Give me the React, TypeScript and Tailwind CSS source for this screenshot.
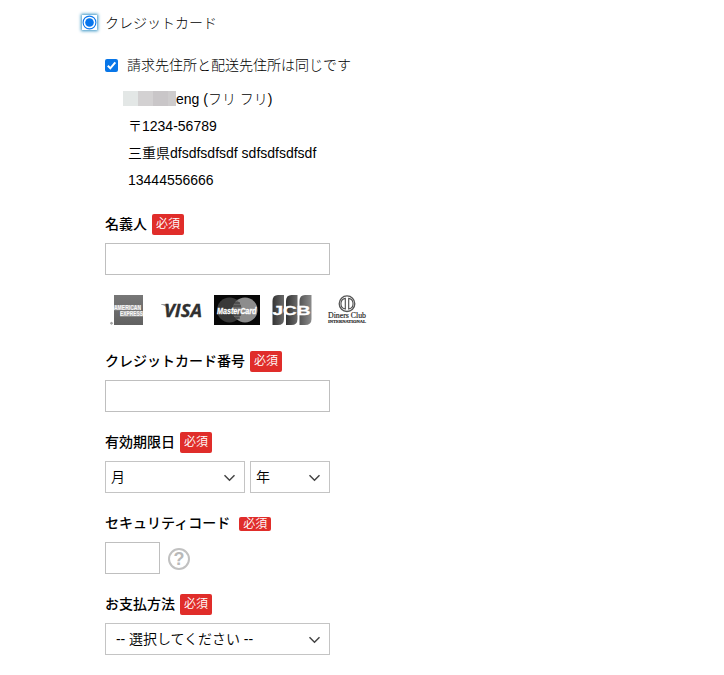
import type { ReactNode } from "react";

function Badge({ compact = false }: { compact?: boolean }) {
  return (
    <span
      className={`flex w-8 shrink-0 items-center justify-center rounded-[2px] bg-[#e02d2a] text-xs font-[350] text-white ${
        compact ? "ml-[9px] mt-px h-3.5" : "ml-[5px] h-[21px] pb-0.5"
      }`}
    >
      <span className={compact ? "leading-[14px]" : "leading-5"}>必須</span>
    </span>
  );
}

function Field({ label, compact, children }: { label: string; compact?: boolean; children: ReactNode }) {
  return (
    <div className="mb-5">
      <div className="mb-2 flex h-[21px] items-center">
        <span className="-mt-0.5 text-sm leading-5 font-medium">{label}</span>
        <Badge compact={compact} />
      </div>
      {children}
    </div>
  );
}

function TextBox({ narrow = false }: { narrow?: boolean }) {
  return (
    <input
      type="text"
      className={`block h-8 border border-[#bfbfbf] bg-white px-2 outline-none ${narrow ? "w-[55px]" : "w-[225px]"}`}
    />
  );
}

function Select({ text, className }: { text: string; className: string }) {
  return (
    <div
      className={`flex h-8 items-center justify-between border border-[#c4c4c4] bg-white pr-2 text-sm ${className}`}
    >
      <span className="leading-5 font-[350] tracking-[-0.04px] whitespace-pre">{text}</span>
      <svg width="13" height="8" viewBox="0 0 13 8" className="mt-0.5" fill="none" stroke="#444" strokeWidth="1.5">
        <path d="M1.5 1.2 6.5 6.2 11.5 1.2" />
      </svg>
    </div>
  );
}

function Cards() {
  return (
    <div className="mb-[26px] flex h-[30px] items-start">
      <svg width="34" height="30" viewBox="0 0 34 30" className="ml-[5px] overflow-visible">
        <defs>
          <linearGradient id="amex" x2="0" y2="1">
            <stop stopColor="#777" />
            <stop offset="1" stopColor="#616161" />
          </linearGradient>
        </defs>
        <path d="M4 0h29v30H4z" fill="url(#amex)" />
        <path d="M4 10h27v5.3H4zM10 16.2h23v5.3H10z" fill="#a5a5a5" />
        <g fontFamily="Liberation Sans" fontWeight="bold" fontSize="6.5" fill="#f7f7f7">
          <text x="4" y="15" textLength="27" lengthAdjust="spacingAndGlyphs">AMERICAN</text>
          <text x="10" y="21.2" textLength="23" lengthAdjust="spacingAndGlyphs">EXPRESS</text>
        </g>
        <circle cx="1.5" cy="28.3" r="1" fill="#aaa" stroke="#777" strokeWidth=".5" />
      </svg>
      <svg width="42" height="30" viewBox="0 0 42 30" className="ml-[17px] overflow-visible">
        <path d="M0 9h7l2 7Q6 11 0 9.5Z" fill="#999" />
        <text x="3" y="21.8" fontFamily="Open Sans" fontSize="17.5" fontWeight="700" fontStyle="italic" textLength="38" lengthAdjust="spacingAndGlyphs" fill="#303030" stroke="#303030" strokeWidth=".3">
          VISA
        </text>
      </svg>
      <svg width="46" height="30" viewBox="0 0 46 30" className="ml-[11px] overflow-visible">
        <path d="M0 0h46v30H0z" fill="#080808" />
        <circle cx="15.5" cy="15" r="12.5" fill="#393939" />
        <circle cx="31" cy="15" r="12.5" fill="#8d8d8d" />
        <path d="M23.2 5.3a12.5 12.5 0 0 1 0 19.4a12.5 12.5 0 0 1 0-19.4Z" fill="#686868" />
        <path d="M20 8h6M19 11h8M19 20h8M20 23h6" stroke="#393939" />
        <text x="3" y="19" fontFamily="Liberation Sans" fontSize="9.8" fontWeight="bold" fontStyle="italic" textLength="39.5" lengthAdjust="spacingAndGlyphs" fill="white" stroke="white" strokeWidth=".3">
          MasterCard
        </text>
      </svg>
      <svg width="40" height="30" viewBox="0 0 40 30" className="ml-3 overflow-visible">
        <defs>
          <linearGradient id="jcb">
            <stop stopColor="#343434" />
            <stop offset="1" stopColor="#696969" />
          </linearGradient>
          <linearGradient id="jcbRight">
            <stop stopColor="#555" />
            <stop offset="1" stopColor="#8b8b8b" />
          </linearGradient>
        </defs>
        <path d="M6 0h6v24q0 6-6 6H.5V6Q.5 0 6 0Z" fill="url(#jcb)" />
        <path d="M19.5 0h6v24q0 6-6 6H14V6q0-6 5.5-6Z" fill="url(#jcb)" />
        <path d="M33 0h6.5v24q0 6-6.5 6h-5.5V6q0-6 5.5-6Z" fill="url(#jcbRight)" />
        <text x="0.5" y="19.7" fontFamily="Liberation Sans" fontSize="13" fontWeight="bold" textLength="38" lengthAdjust="spacingAndGlyphs" fill="white" stroke="white" strokeWidth=".3">
          JCB
        </text>
      </svg>
      <svg width="40" height="30" viewBox="0 0 40 30" className="ml-[15px] overflow-visible">
        <circle cx="20" cy="8.7" r="7.8" fill="white" stroke="#555" strokeWidth="1.3" />
        <path d="M18.3 3.4v10.6a5.4 5.4 0 0 1 0-10.6ZM21.7 3.4a5.4 5.4 0 0 1 0 10.6Z" fill="white" stroke="#4c4c4c" strokeWidth="1.1" />
        <g fontFamily="Liberation Serif" fill="#292929" stroke="#292929" strokeWidth=".2">
          <text x="1" y="23" fontSize="8.5" textLength="38" lengthAdjust="spacingAndGlyphs">Diners Club</text>
          <text x="1" y="28" fontSize="5" fontWeight="bold" textLength="38" lengthAdjust="spacingAndGlyphs">INTERNATIONAL</text>
        </g>
      </svg>
    </div>
  );
}

export default function App() {
  return (
    <main className="h-[675px] w-[724px] overflow-hidden bg-white pt-[13px] pl-[82px] font-['Liberation_Sans','Noto_Sans_CJK_JP',sans-serif] text-sm text-black">
      <label className="flex h-5 items-center">
        <svg width="15" height="15" viewBox="0 0 15 15" className="-mt-0.5 bg-white shadow-[0_0_3px_1px_#3794c4]">
          <circle cx="7.5" cy="7.5" r="6.4" fill="white" stroke="#0876ed" strokeWidth="1.1" />
          <circle cx="7.5" cy="7.5" r="4.3" fill="#0876ed" />
        </svg>
        <span className="ml-2 leading-5 font-light">クレジットカード</span>
      </label>
      <div className="ml-[23px]">
        <label className="mt-[22px] flex h-5 items-center">
          <svg width="13" height="13" viewBox="0 0 13 13">
            <rect width="13" height="13" rx="2" fill="#0876e8" />
            <path d="m2.8 6.8 2.5 2.5 5-6" fill="none" stroke="white" strokeWidth="2" />
          </svg>
          <span className="ml-[9px] leading-5 font-light">請求先住所と配送先住所は同じです</span>
        </label>
        <div className="mt-[11px] mb-5 ml-[23px] h-[108px] leading-[27px]">
          <div className="-ml-[5px] flex h-[27px] items-center">
            <span className="flex h-[15px] w-[53px] -translate-y-px">
              <i className="w-[15px] bg-[#e3e7e6]" />
              <i className="w-[15px] bg-[#d3d1d2]" />
              <i className="w-[15px] bg-[#c9c6c8]" />
              <i className="w-2 bg-[#cecccd]" />
            </span>
            <span className="font-light">eng (フリ フリ)</span>
          </div>
          <div className="h-[27px] font-light">〒1234-56789</div>
          <div className="h-[27px] font-[350]">三重県dfsdfsdfsdf sdfsdfsdfsdf</div>
          <div className="h-[27px]">13444556666</div>
        </div>
        <Field label="名義人">
          <TextBox />
        </Field>
        <Cards />
        <Field label="クレジットカード番号">
          <TextBox />
        </Field>
        <Field label="有効期限日">
          <div className="flex gap-[5px]">
            <Select text="月" className="w-[140px] pl-[5px]" />
            <Select text="年" className="w-20 pl-[5px]" />
          </div>
        </Field>
        <Field label="セキュリティコード" compact>
          <div className="flex items-center">
            <TextBox narrow />
            <span className="mt-0.5 ml-2 flex size-[22px] items-center justify-center rounded-full border-2 border-[#c1c1c1] text-lg leading-none font-bold text-[#b9b9b9]">
              ?
            </span>
          </div>
        </Field>
        <Field label="お支払方法">
          <Select text="-- 選択してください --" className="w-[225px] pl-2.5" />
        </Field>
      </div>
    </main>
  );
}
